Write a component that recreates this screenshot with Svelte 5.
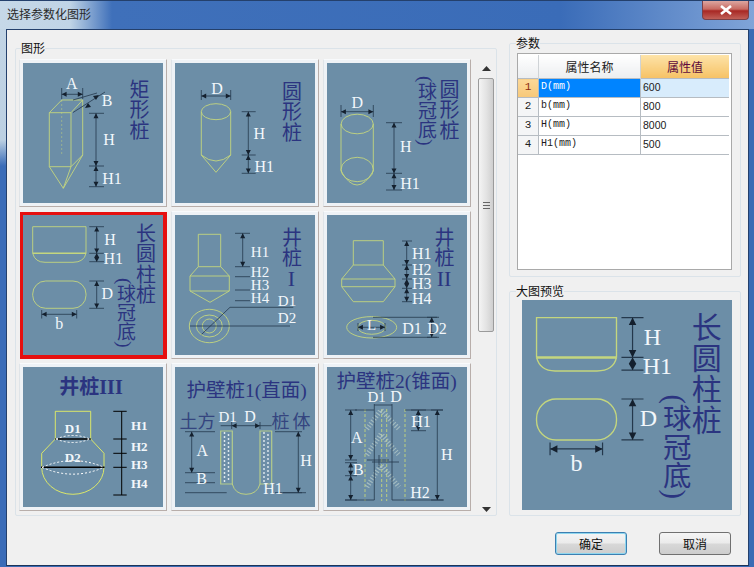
<script>
  // dimension line with ticks and inward arrow heads, in tile coordinates
  function vdim(x, ys, x0, x1, s = 3.5) {
    let line = `M${x} ${ys[0]}V${ys[ys.length - 1]}`;
    let heads = "";
    for (const y of ys) line += `M${x0} ${y}H${x1}`;
    for (let i = 0; i < ys.length - 1; i++) {
      const a = ys[i];
      const b = ys[i + 1];
      const h = Math.min(s * 1.4, (b - a) / 2);
      heads += `M${x} ${a}l${-s / 1.4} ${h}h${s * 1.43}zM${x} ${b}l${-s / 1.4} ${-h}h${s * 1.43}z`;
    }
    return { line, heads };
  }

  function hdim(y, xs, y0, y1, s = 3.5) {
    let line = `M${xs[0]} ${y}H${xs[xs.length - 1]}`;
    let heads = "";
    for (const x of xs) line += `M${x} ${y0}V${y1}`;
    for (let i = 0; i < xs.length - 1; i++) {
      const a = xs[i];
      const b = xs[i + 1];
      const h = Math.min(s * 1.4, (b - a) / 2);
      heads += `M${a} ${y}l${h} ${-s / 1.4}v${s * 1.43}zM${b} ${y}l${-h} ${-s / 1.4}v${s * 1.43}z`;
    }
    return { line, heads };
  }

  const tiles = [0, 1, 2, 3, 4, 5, 6, 7, 8];
  const selected = 3;

  const params = [
    { id: 1, name: "D(mm)", value: "600" },
    { id: 2, name: "b(mm)", value: "800" },
    { id: 3, name: "H(mm)", value: "8000" },
    { id: 4, name: "H1(mm)", value: "500" },
  ];
</script>

{#snippet dim(d, cls = "")}
  <path class="dim {cls}" d={d.line} />
  <path class="head {cls}" d={d.heads} />
{/snippet}

{#snippet label(x, y, s, size = 16)}
  <text class="lbl" {x} {y} font-size={size}>{s}</text>
{/snippet}

{#snippet col(x, y, s, size = 20, gap = 0.5)}
  <text class="col" {x} {y} font-size={size} letter-spacing={gap}>{s}</text>
{/snippet}

{#snippet diagram(n)}
  <svg class="pic" viewBox="0 0 140 140">
    <rect width="140" height="140" class="bg" />
    {#if n === 0}
      <path class="y" d="M26.3 49.7H48V103.7H26.3ZM26.3 49.7L38.7 37H59.7V92L48 103.7M48 49.7L59.7 37M26.3 103.7L40.3 125.3L48 103.7M59.7 92L40.3 125.3" />
      <path class="y thin" stroke-dasharray="2 2" d="M38.7 37V92" />
      {@render dim(hdim(31.3, [38.7, 59.7], 25, 36))}
      <path class="dim" d="M50 49.5L82 29M50 37L74 30" />
      <path class="head" d="M76 32l-6 1l3 4zM62 45l6-1l-3-4z" />
      {@render dim(vdim(73, [50.3, 103, 123.7], 66, 81))}
      {@render label(48.7, 26, "A")}
      {@render label(84, 43, "B")}
      {@render label(86, 82, "H")}
      {@render label(89, 121, "H1")}
      {@render col(115, 16, "矩形桩")}
    {:else if n === 1}
      <path class="y" d="M26.3 48.7V92L41 109.3L55.7 92V48.7M26.3 92Q41 104 55.7 92" />
      <ellipse class="y" cx="41" cy="48.7" rx="14.7" ry="8" />
      {@render dim(hdim(33, [26.3, 55.7], 27, 37))}
      {@render dim(vdim(73.3, [48.7, 92, 110.3], 66.7, 80.7))}
      {@render label(42, 30.5, "D")}
      {@render label(84.3, 76.3, "H")}
      {@render label(89.3, 109, "H1")}
      {@render col(115.5, 18, "圆形桩")}
    {:else if n === 2}
      <path class="y" d="M14 61V108Q30 136 46.3 108V61" />
      <ellipse class="y" cx="30.2" cy="61" rx="16.1" ry="9.8" />
      <ellipse class="y" cx="30.2" cy="106.5" rx="16.1" ry="12.2" />
      {@render dim(hdim(48.7, [14, 46.3], 42, 54))}
      {@render dim(vdim(67, [59.7, 110.3, 127], 59, 75))}
      {@render label(30.3, 44.5, "D")}
      {@render label(78.7, 88.7, "H")}
      {@render label(83, 125.5, "H1")}
      {@render col(121, 16, "圆形桩")}
      {@render col(98.5, 13, "(球冠底)", 19, 0)}
    {:else if n === 3}
      <path class="y" d="M9.7 38.3V11.7H63V38.3" />
      <path class="y bold" d="M9.7 38.3H63" />
      <path class="y" d="M9.7 38.3Q12 47.3 22 47.3H50Q61 47.3 63 38.3" />
      <rect class="y" x="9.7" y="66" width="53.3" height="27.3" rx="13" />
      {@render dim(vdim(73.7, [11.7, 38.3, 46.7], 66.3, 81))}
      {@render dim(vdim(73.7, [66, 93.3], 66.3, 81))}
      {@render dim(hdim(99.3, [18.7, 53.7], 95, 103.5))}
      {@render label(87, 30, "H")}
      {@render label(90.3, 49, "H1")}
      {@render label(84.3, 84.3, "D")}
      {@render label(36.3, 114, "b")}
      {@render col(121.5, 8, "长圆柱桩")}
      {@render col(101.5, 63, "(球冠底)", 19, 0)}
    {:else if n === 4}
      <path class="y" d="M23.3 51.7V19.3H45.7V51.7M23.3 51.7H45.7M23.3 51.7L15 61V76L35 87.3L54.3 76V61L45.7 51.7M15 61H54.3M15 76H54.3" />
      <circle class="y" cx="34.3" cy="111" r="7" />
      <ellipse class="y" cx="34.3" cy="111" rx="13" ry="11" />
      <ellipse class="y" cx="34.3" cy="111" rx="20" ry="16.7" />
      {@render dim(vdim(67.7, [18.3, 51.7], 60, 75))}
      <path class="dim" d="M60 61.7H75M60 75H75M60 85.7H75M26.7 119.3L55 92.3H118.3M15 111H115" />
      {@render label(85, 41.5, "H1", 15)}
      {@render label(85, 61.5, "H2", 15)}
      {@render label(85, 75, "H3", 15)}
      {@render label(85, 87.5, "H4", 15)}
      {@render label(112, 91, "D1", 15)}
      {@render label(112, 107.7, "D2", 15)}
      {@render col(115.5, 12, "井桩")}
      <text class="head-title" x="116.5" y="71" font-size="22">I</text>
    {:else if n === 5}
      <path class="y" d="M26.3 50V25.7H56.3V50M26.3 50H56.3M26.3 50L14.7 64V71.7L26.3 86.7H56.3L68 71.7V64L56.3 50M14.7 64H68M14.7 71.7H68" />
      <ellipse class="y" cx="44.7" cy="112.3" rx="25" ry="10.7" />
      <ellipse class="y" cx="44.7" cy="112.3" rx="14" ry="7" />
      {@render dim(vdim(79.7, [26, 50, 64, 73.3, 86.7], 75, 85))}
      {@render dim(hdim(112.3, [31, 58], 108, 116))}
      <path class="dim" d="M46 102.3H112M46 122.3H112" />
      {@render dim(vdim(104.7, [102.3, 122.3], 100, 110))}
      {@render label(94.7, 43.5, "H1")}
      {@render label(94.7, 60, "H2")}
      {@render label(94.7, 73.5, "H3")}
      {@render label(94.7, 88.5, "H4")}
      {@render label(44.7, 115, "L", 15)}
      {@render label(85, 118.5, "D1")}
      {@render label(110, 118.5, "D2")}
      {@render col(116, 12, "井桩")}
      <text class="head-title" x="117" y="71" font-size="22">II</text>
    {:else if n === 6}
      <text class="head-title bold" x="68" y="27.3" font-size="20">井桩<tspan>III</tspan></text>
      <path class="y bright" d="M32.3 72V44.3H67.7V72L81 86.3V100.3A31.15 27 0 0 1 18.7 100.3V86.3L32.3 72" />
      <path class="black" d="M32.3 72H67.7M18 100.3H81.5" />
      <path class="dash" d="M33 72Q50 65 67 72M33 72Q50 79 67 72M19 100.3Q50 87 81 100.3M19 100.3Q50 114 81 100.3" />
      <path class="black thin" d="M98.7 44.3V128M90.3 44.3H103.7M90.3 72H103.7M90.3 86.3H103.7M90.3 100.3H103.7M90.3 128H103.7" />
      <text class="lbl bold" x="49.7" y="66" font-size="13">D1</text>
      <text class="lbl bold" x="49.7" y="94.5" font-size="13">D2</text>
      <text class="lbl bold" x="116.3" y="63" font-size="13">H1</text>
      <text class="lbl bold" x="116.3" y="84" font-size="13">H2</text>
      <text class="lbl bold" x="116.3" y="101.5" font-size="13">H3</text>
      <text class="lbl bold" x="116.3" y="120.5" font-size="13">H4</text>
    {:else if n === 7}
      <text class="head-title" x="71.7" y="29.5" font-size="19.5">护壁桩1(直面)</text>
      <text class="head-title soft" x="22.5" y="61" font-size="18">土方</text>
      <text class="head-title soft spaced" x="117.5" y="61" font-size="18">桩体</text>
      <path class="y wall" d="M45.7 64H57.3V117H45.7ZM85 64H96.7V117H85Z" />
      <path class="y" d="M57.3 117Q60 127.3 71 127.3Q82 127.3 85 117" />
      <path class="dots" d="M49.5 66V116M53.5 68V116M89 66V116M93 68V116" />
      {@render dim(hdim(58.7, [56.7, 85], 55, 62))}
      <path class="dim" d="M45.7 58.7H56.7M85 58.7H96.7M10 115.7H40M10 125.7H51.7M108 125.7H131" />
      {@render dim(vdim(16.7, [64.7, 105.7], 10, 40))}
      {@render dim(vdim(123.3, [64.7, 125.7], 100, 127))}
      {@render label(52.7, 54.5, "D1", 15)}
      {@render label(75, 54.5, "D")}
      {@render label(27.3, 89, "A")}
      {@render label(26.7, 117, "B")}
      {@render label(131, 99, "H")}
      {@render label(98, 126.5, "H1")}
    {:else}
      <text class="head-title" x="69.7" y="20.5" font-size="19.5">护壁桩2(锥面)</text>
      <path class="y dashed" d="M38 42V134M54.7 42V134M59.7 42V134M78 42V134" />
      <path class="chev" d="M40 62L54 43L72 62M40 88L54 67L72 88M40 120L54 98L72 120" />
      <path class="dim" d="M47.3 37V133M65 37V133M47.3 38H65M18 133H47.3M65 133H117M40 93H62M52 88V100M45 95H72M28 43H47M78 43H116" />
      {@render dim(vdim(23.7, [43, 93], 18, 30))}
      {@render dim(vdim(23.7, [95.7, 108.7, 133], 18, 30))}
      {@render dim(vdim(91.3, [43, 63.7], 84, 99))}
      {@render dim(vdim(110.3, [43, 133], 104, 116))}
      {@render label(49.7, 34.7, "D1", 15)}
      {@render label(69, 34.7, "D")}
      {@render label(29.7, 76.3, "A")}
      {@render label(31.3, 108, "B")}
      {@render label(94, 60, "H1")}
      {@render label(119.7, 93, "H")}
      {@render label(93, 131, "H2")}
    {/if}
  </svg>
{/snippet}

<div class="window">
  <header class="titlebar">
    <span class="title">选择参数化图形</span>
    <button class="close" type="button" aria-label="关闭">
      <svg width="12" height="10" viewBox="0 0 12 10">
        <path d="M1 1L11 9M11 1L1 9" stroke="#fff" stroke-width="2.6" />
      </svg>
    </button>
  </header>

  <main class="client">
    <fieldset class="group shapes">
      <legend>图形</legend>
      <div class="shapesInner">
        <div class="tileGrid">
          {#each tiles as n}
            <div class="tile" class:selected={n === selected}>
              {@render diagram(n)}
            </div>
          {/each}
        </div>
        <div class="scrollbar">
          <div class="sbBtn">
            <svg width="9" height="5" viewBox="0 0 9 5"><path d="M4.5 0L9 5H0z" fill="#333" /></svg>
          </div>
          <div class="thumb">
            <span class="grip"></span>
          </div>
          <div class="sbSpace"></div>
          <div class="sbBtn">
            <svg width="9" height="5" viewBox="0 0 9 5"><path d="M4.5 5L0 0H9z" fill="#333" /></svg>
          </div>
        </div>
      </div>
    </fieldset>

    <div class="side">
      <fieldset class="group paramGroup">
        <legend>参数</legend>
        <div class="tableBox">
          <table>
            <thead>
              <tr>
                <th class="idx"></th>
                <th class="nameHead">属性名称</th>
                <th class="valueHead">属性值</th>
              </tr>
            </thead>
            <tbody>
              {#each params as p, i}
                <tr class:active={i === 0}>
                  <td class="idx">{p.id}</td>
                  <td class="name">{p.name}</td>
                  <td class="value">{p.value}</td>
                </tr>
              {/each}
            </tbody>
          </table>
        </div>
      </fieldset>

      <fieldset class="group previewGroup">
        <legend>大图预览</legend>
        <div class="preview">
          {@render diagram(selected)}
        </div>
      </fieldset>
    </div>

    <div class="actions">
      <button class="btn primary" type="button">确定</button>
      <button class="btn" type="button">取消</button>
    </div>
  </main>
</div>

<style>
  :global(body) {
    margin: 0;
    background: #1f3f70;
  }

  .window {
    width: 754px;
    height: 567px;
    box-sizing: border-box;
    display: flex;
    flex-direction: column;
    padding: 0 5px 1px 6px;
    background:
      linear-gradient(180deg, #c4d6e6 0, #bcd0e2 140px, #3a6cb8 166px) left / 6px 100% no-repeat,
      #3a6cb4;
    font-family: "Liberation Sans", "Noto Sans CJK SC", sans-serif;
    font-size: 12px;
    color: #1a1a1a;
    overflow: hidden;
  }

  .titlebar {
    flex: 0 0 29px;
    margin: 0 -5px 0 -6px;
    padding-left: 7px;
    display: flex;
    justify-content: space-between;
    align-items: flex-start;
    background: linear-gradient(90deg, #c6d8e8 0, #c0d4e6 70px, #3f70ba 112px, #3a6cb8 560px, #80a4d8 754px);
    border-top: 1px solid #24406c;
    box-sizing: border-box;
  }

  .title {
    line-height: 28px;
    font-size: 12px;
    color: #2a2a2a;
  }

  .close {
    width: 47px;
    height: 19px;
    margin-right: 5px;
    padding: 0;
    display: grid;
    place-items: center;
    border: 1px solid #7a4048;
    border-top: 0;
    border-radius: 0 0 4px 4px;
    background: linear-gradient(180deg, #dca6a0 0, #c86a62 45%, #a82824 55%, #c06058 100%);
  }

  .client {
    flex: 1;
    box-sizing: border-box;
    display: grid;
    grid-template-columns: 482px 232px;
    grid-template-rows: 480px auto;
    column-gap: 12px;
    padding: 6px 6px 0 8px;
    background: #f0f0f0;
    border: 1px solid #24406c;
    border-bottom-color: #1c3358;
  }

  .group {
    margin: 0;
    padding: 0;
    box-sizing: border-box;
    min-width: 0;
    border: 1px solid #dbe3e9;
    border-radius: 2px;
  }

  legend {
    margin-left: 5px;
    padding: 2px 0 0;
    font-size: 12px;
    line-height: 12px;
    color: #111;
  }

  .shapes {
    margin-top: 5px;
    height: 475px;
  }

  .shapesInner {
    display: flex;
    gap: 5px;
    padding: 4px 0 0 3px;
  }

  .tileGrid {
    display: grid;
    grid-template-columns: repeat(3, 148px);
    grid-auto-rows: 148px;
    gap: 4px;
  }

  .tile {
    box-sizing: border-box;
    padding: 3px;
    background: #eef2f6;
    border: 1px solid;
    border-color: #f8fafc #b8aeaa #b8aeaa #dfe4e8;
  }

  .tile.selected {
    padding: 0;
    border: 4px solid #e60f0f;
    border-left-width: 3px;
    border-top-width: 3px;
    margin: 1px 0 0 1px;
    height: 147px;
    width: 147px;
    overflow: hidden;
  }

  .pic {
    display: block;
    width: 100%;
    height: 100%;
  }

  .bg {
    fill: #6c8ea7;
  }

  .y {
    fill: none;
    stroke: #c4d67e;
    stroke-width: 0.9;
  }

  .y.bold {
    stroke-width: 1.6;
  }

  .y.thin {
    stroke-width: 0.5;
  }

  .y.bright {
    stroke: #e6f062;
  }

  .y.dashed {
    stroke-dasharray: 3 2;
  }

  .y.wall {
    stroke: #b4cc8c;
    stroke-width: 1.2;
  }

  .dim {
    fill: none;
    stroke: #24384c;
    stroke-width: 0.8;
  }

  .head {
    fill: #14202e;
  }

  .black {
    fill: none;
    stroke: #000;
    stroke-width: 1.6;
  }

  .black.thin {
    stroke-width: 1;
  }

  .dash {
    fill: none;
    stroke: #fff;
    stroke-width: 1;
    stroke-dasharray: 2 2;
  }

  .dots {
    fill: none;
    stroke: #e8f0f4;
    stroke-width: 1.8;
    stroke-linecap: round;
    stroke-dasharray: 0 4;
  }

  .chev {
    fill: none;
    stroke: #b4cac8;
    stroke-width: 5;
    stroke-dasharray: 1.2 1.8;
    opacity: 0.75;
  }

  .lbl {
    font-family: "Liberation Serif", serif;
    fill: #f2f7fb;
    text-anchor: middle;
  }

  .bold {
    font-weight: 700;
  }

  .col {
    font-family: "Liberation Serif", "Noto Sans CJK SC", serif;
    fill: #2b3480;
    writing-mode: vertical-rl;
  }

  .head-title {
    font-family: "Liberation Serif", "Noto Sans CJK SC", serif;
    fill: #2b3480;
    text-anchor: middle;
  }

  .head-title.soft {
    fill: #34457f;
  }

  .head-title.spaced {
    letter-spacing: 3px;
  }

  .scrollbar {
    width: 20px;
    height: 460px;
    display: flex;
    flex-direction: column;
    align-items: center;
  }

  .sbBtn {
    flex: 0 0 19px;
    display: grid;
    place-items: center;
  }

  .thumb {
    box-sizing: border-box;
    flex: 0 0 254px;
    width: 16px;
    display: grid;
    place-items: center;
    border: 1px solid #9b9b9b;
    border-radius: 2px;
    background: linear-gradient(90deg, #f4f4f4, #e2e2e2 55%, #cfcfcf);
  }

  .grip {
    width: 7px;
    height: 5px;
    border-top: 1px solid #666;
    border-bottom: 1px solid #666;
    background: linear-gradient(#666, #666) center / 100% 1px no-repeat;
  }

  .sbSpace {
    flex: 1;
  }

  .side {
    display: flex;
    flex-direction: column;
    gap: 7px;
  }

  .paramGroup {
    height: 241px;
  }

  .previewGroup {
    height: 232px;
  }

  .paramGroup legend,
  .previewGroup legend {
    margin-left: 6px;
  }

  .tableBox {
    box-sizing: border-box;
    width: 215px;
    height: 217px;
    margin: 3px 0 0 7px;
    padding: 1px 2px 0 0;
    background: #fff;
    border: 1px solid #a9a9a9;
  }

  table {
    width: 211px;
    table-layout: fixed;
    border-collapse: collapse;
  }

  th {
    height: 23px;
    padding: 0;
    font-weight: 400;
    font-size: 12px;
    background: linear-gradient(180deg, #fff, #eceef0);
    border-right: 1px solid #cfd3d6;
  }

  th.idx {
    width: 20px;
  }

  th.nameHead {
    width: 101px;
    color: #222;
  }

  th.valueHead {
    color: #5e0a3c;
    background: linear-gradient(180deg, #fde3a8, #f6c266);
    border-right: 0;
  }

  td {
    height: 18px;
    padding: 0 0 0 2px;
    border: 1px solid #b6bcc2;
    border-left: 0;
    font-size: 10.5px;
    line-height: 16px;
    vertical-align: top;
  }

  td.idx {
    padding: 0;
    text-align: center;
    color: #222;
    background: #f4f5f6;
    font-family: "Liberation Mono", monospace;
    font-size: 11px;
  }

  td.name {
    font-family: "Liberation Mono", monospace;
    font-size: 10px;
  }

  td.value {
    border-right: 0;
  }

  tr.active td.idx {
    color: #8a2a10;
    background: linear-gradient(180deg, #fcd898, #f7c878);
  }

  tr.active td.name {
    color: #fff;
    background: #0084ff;
  }

  tr.active td.value {
    background: #d8ecfc;
  }

  .preview {
    width: 210px;
    height: 210px;
    margin: 2px 0 0 12px;
  }

  .actions {
    grid-column: 1 / -1;
    display: flex;
    justify-content: flex-end;
    gap: 32px;
    padding: 16px 10px 0 0;
  }

  .btn {
    width: 72px;
    height: 23px;
    padding: 0;
    font-family: inherit;
    font-size: 12px;
    color: #111;
    border: 1px solid #707070;
    border-radius: 3px;
    background: linear-gradient(180deg, #f4f4f4 0, #ebebeb 48%, #d8d8d8 52%, #cdcdcd 100%);
  }

  .btn.primary {
    border: 1px solid #3c7fb1;
    box-shadow: inset 0 0 0 1px #8fd6ee;
  }
</style>
